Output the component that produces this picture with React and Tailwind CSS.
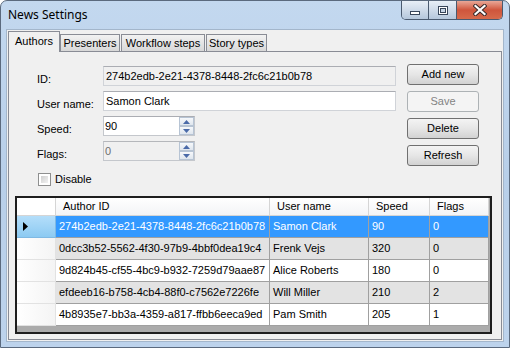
import React from "react";

const rows = [
  ["274b2edb-2e21-4378-8448-2fc6c21b0b78", "Samon Clark", "90", "0"],
  ["0dcc3b52-5562-4f30-97b9-4bbf0dea19c4", "Frenk Vejs", "320", "0"],
  ["9d824b45-cf55-4bc9-b932-7259d79aae87", "Alice Roberts", "180", "0"],
  ["efdeeb16-b758-4cb4-88f0-c7562e7226fe", "Will Miller", "210", "2"],
  ["4b8935e7-bb3a-4359-a817-ffbb6eeca9ed", "Pam Smith", "205", "1"],
];

const widths = ["w-[214px]", "w-[99px]", "w-[61px]", "w-[59px]"];

function Spinner() {
  return (
    <div className="ml-auto flex h-full w-[15px] flex-col">
      <div className="flex h-1/2 items-center justify-center border border-[#b7c4d4] bg-gradient-to-b from-[#f6f8fb] to-[#dfe6ee]">
        <svg width="7" height="4" viewBox="0 0 7 4">
          <path d="M0 4 L3.5 0 L7 4 Z" fill="#4a6aa8" />
        </svg>
      </div>
      <div className="flex h-1/2 items-center justify-center border border-[#b7c4d4] bg-gradient-to-b from-[#f6f8fb] to-[#dfe6ee]">
        <svg width="7" height="4" viewBox="0 0 7 4">
          <path d="M0 0 L3.5 4 L7 0 Z" fill="#4a6aa8" />
        </svg>
      </div>
    </div>
  );
}

function Button({ children, disabled }) {
  return (
    <div
      className={
        disabled
          ? "flex h-[21px] w-[72px] items-center justify-center rounded-[3px] border border-[#adb2b5] bg-[#f4f4f4] text-[#838383]"
          : "flex h-[21px] w-[72px] items-center justify-center rounded-[3px] border border-[#707070] bg-gradient-to-b from-[#f4f4f4] via-[#e6e6e6] to-[#d2d2d2]"
      }
    >
      {children}
    </div>
  );
}

function Label({ children }) {
  return <div className="w-[66px] self-start pt-[7px] leading-[13px]">{children}</div>;
}

export default function App() {
  return (
    <div className="h-[348px] w-[510px] font-['Liberation_Sans',Arial,sans-serif] text-[11px] text-black">
      <div className="flex h-full w-full flex-col rounded-t-[7px] border border-[#5b6a7e] bg-gradient-to-b from-[#c3d8ef] via-[#b8cfe9] to-[#bdd3ec]">
        {/* title bar */}
        <div className="flex h-[28px] items-start pl-[7px] pr-[6px]">
          <span className="mt-[6px] font-['Segoe_UI','Noto_Sans',sans-serif] text-[12px] leading-[16px]">
            News Settings
          </span>
          <div className="ml-auto flex h-[19px] overflow-hidden rounded-b-[5px] border border-t-0 border-[#4a5a6f]">
            <div className="flex w-[27px] items-center justify-center border-r border-[#4a5a6f] bg-gradient-to-b from-[#e8eff7] via-[#cfdbe9] to-[#b5c7dc]">
              <div className="mt-[5px] h-[4px] w-[10px] border border-[#38465a] bg-white" />
            </div>
            <div className="flex w-[28px] items-center justify-center border-r border-[#4a5a6f] bg-gradient-to-b from-[#e8eff7] via-[#cfdbe9] to-[#b5c7dc]">
              <div className="h-[9px] w-[10px] border border-[#38465a] bg-white p-[1px]">
                <div className="h-full w-full border border-[#38465a] bg-[#c7d5e5]" />
              </div>
            </div>
            <div className="flex w-[45px] items-center justify-center bg-gradient-to-b from-[#e8a797] via-[#cf553c] to-[#d76a4b]">
              <svg width="14" height="12" viewBox="0 0 14 12">
                <path d="M2.5 2 L11.5 10 M11.5 2 L2.5 10" stroke="#3a2a2a" strokeWidth="4.2" strokeLinecap="square" />
                <path d="M2.5 2 L11.5 10 M11.5 2 L2.5 10" stroke="#ffffff" strokeWidth="2.2" strokeLinecap="square" />
              </svg>
            </div>
          </div>
        </div>

        {/* client */}
        <div className="mx-[5px] mb-[5px] flex flex-1 flex-col border border-[#a3b6cb] bg-[#f0f0f0] px-[1px] pt-[1px] pb-[1px]">
          {/* tab strip */}
          <div className="relative z-10 flex h-[20px] items-end">
            <div className="-mb-px flex h-[21px] w-[52px] items-center justify-center border border-b-0 border-[#898c95] bg-[#f0f0f0] pb-[2px]">
              Authors
            </div>
            <div className="flex h-[17px] w-[60px] items-center justify-center border border-b-0 border-[#898c95] bg-gradient-to-b from-[#f2f2f2] to-[#d8d8d8]">
              Presenters
            </div>
            <div className="ml-[1px] flex h-[17px] w-[84px] items-center justify-center border border-b-0 border-[#898c95] bg-gradient-to-b from-[#f2f2f2] to-[#d8d8d8]">
              Workflow steps
            </div>
            <div className="ml-[1px] flex h-[17px] w-[61px] items-center justify-center border border-b-0 border-[#898c95] bg-gradient-to-b from-[#f2f2f2] to-[#d8d8d8]">
              Story types
            </div>
          </div>

          {/* tab page */}
          <div className="flex flex-1 flex-col border border-[#898c95] bg-[#f0f0f0]">
            <div className="flex pt-[12px]">
              <div className="flex flex-col pl-[28px] pt-[2px]">
                <div className="flex h-[20px]">
                  <Label>ID:</Label>
                  <div className="flex w-[293px] items-center border border-[#d0d3d8] border-t-[#abadb3] bg-[#f0f0f0] pl-[2px]">
                    274b2edb-2e21-4378-8448-2fc6c21b0b78
                  </div>
                </div>
                <div className="mt-[5px] flex h-[20px]">
                  <Label>User name:</Label>
                  <div className="flex w-[293px] items-center border border-[#d0d3d8] border-t-[#abadb3] bg-white pl-[2px]">
                    Samon Clark
                  </div>
                </div>
                <div className="mt-[5px] flex h-[20px]">
                  <Label>Speed:</Label>
                  <div className="flex w-[92px] items-center border border-[#c4c7cc] border-t-[#abadb3] bg-white pl-[1px]">
                    <span>90</span>
                    <Spinner />
                  </div>
                </div>
                <div className="mt-[5px] flex h-[20px]">
                  <Label>Flags:</Label>
                  <div className="flex w-[92px] items-center border border-[#c4c7cc] border-t-[#b5b7bb] bg-[#f0f0f0] pl-[1px] text-[#6d6d6d]">
                    <span>0</span>
                    <Spinner />
                  </div>
                </div>
                <div className="mt-[12px] flex h-[13px] items-center pl-[1px]">
                  <div className="h-[13px] w-[13px] border border-[#8e8f8f] bg-white p-[2px]">
                    <div className="h-full w-full bg-gradient-to-br from-[#cfcfcf] to-[#f2f2f2]" />
                  </div>
                  <span className="ml-[4px]">Disable</span>
                </div>
              </div>
              <div className="ml-[11px] flex flex-col gap-[6px]">
                <Button>Add new</Button>
                <Button disabled>Save</Button>
                <Button>Delete</Button>
                <Button>Refresh</Button>
              </div>
            </div>

            {/* data grid */}
            <div className="ml-[6px] mt-[10px] flex h-[138px] w-[477px] flex-col border-2 border-[#1e1e1e] bg-[#ababab]">
              <div className="flex h-[18px]">
                <div className="w-[39px] border-b border-r border-[#d5d5d5] bg-white" />
                {["Author ID", "User name", "Speed", "Flags"].map((h, i) => (
                  <div
                    key={h}
                    className={`${widths[i]} flex items-center border-b border-r border-[#d5d5d5] bg-gradient-to-b from-white to-[#f3f4f6] pl-[7px]`}
                  >
                    {h}
                  </div>
                ))}
              </div>
              {rows.map((r, ri) => {
                const sel = ri === 0;
                const alt = ri % 2 === 1;
                return (
                  <div key={r[0]} className="flex h-[22px]">
                    <div
                      className={
                        sel
                          ? "flex w-[39px] items-center border-b border-r border-[#7fb9e3] bg-gradient-to-b from-[#b4defa] to-[#8ccaf2] pl-[6px]"
                          : "flex w-[39px] items-center border-b border-r border-[#e2e2e2] bg-gradient-to-r from-white to-[#f4f4f4] pl-[6px]"
                      }
                    >
                      {sel && (
                        <svg width="5" height="9" viewBox="0 0 5 9">
                          <path d="M0 0 L5 4.5 L0 9 Z" fill="#000" />
                        </svg>
                      )}
                    </div>
                    {r.map((c, ci) => (
                      <div
                        key={ci}
                        className={`${widths[ci]} flex items-center overflow-hidden whitespace-nowrap border-b border-r border-[#a0a0a0] pl-[3px] ${
                          sel ? "bg-[#3399ff] text-white" : alt ? "bg-[#e3e3e3]" : "bg-white"
                        }`}
                      >
                        {c}
                      </div>
                    ))}
                  </div>
                );
              })}
            </div>
          </div>
        </div>
      </div>
    </div>
  );
}
